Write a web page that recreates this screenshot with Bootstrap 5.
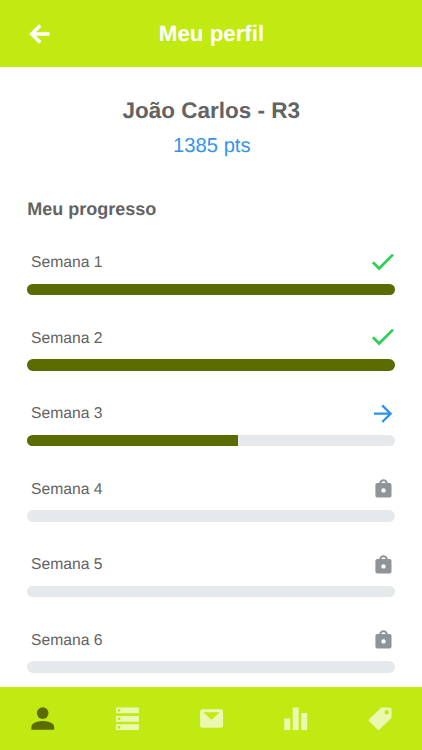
<!DOCTYPE html>
<html lang="pt-BR">
<head>
<meta charset="utf-8">
<meta name="viewport" content="width=device-width, initial-scale=1">
<title>Meu perfil</title>
<link href="https://cdn.jsdelivr.net/npm/bootstrap@5.3.0/dist/css/bootstrap.min.css" rel="stylesheet">
<style>
body{font-family:"Liberation Sans",Arial,sans-serif;color:#636363;height:750px;overflow:hidden;text-rendering:geometricPrecision}
.top-bar{height:66.6px;background:#c0ea12;flex:none;padding:1px 27.5px 0 27.5px}
.top-bar h1{font-size:22.3px;line-height:26px;padding-left:1px}
.side{width:24px}
.person-name{font-size:22.5px;line-height:26px;margin-top:31.4px;padding-left:1px}
.points{font-size:20.2px;line-height:24px;color:#3295e8;margin-top:10px;padding-left:2px}
.section-title{font-size:18px;line-height:22px;margin-top:40px;margin-bottom:20px}
.content{padding:0 27.5px 0 27.2px;min-height:0}
.week{height:75.5px}
.week-head{height:44px;padding:2px 0 0 3.8px;font-size:15.7px}
.progress{--bs-progress-height:11.4px;--bs-progress-bg:#e6e9ec;--bs-progress-border-radius:6px;--bs-progress-bar-bg:#5b6b00}
.week-head svg{width:24px;height:24px;flex:none}
.tab-bar{height:63px;background:#c0ea12;flex:none}
.tab-bar a{color:#ebf8b0}
.tab-bar a.active{color:#5b6b00}
.tab-bar svg{width:26px;height:26px}
</style>
</head>
<body class="d-flex flex-column bg-white">
<svg class="d-none">
  <symbol id="check" viewBox="0 0 24 24"><path d="M1.900 11.300l6.200 6.200L22 3.600" fill="none" stroke="#2fce57" stroke-width="2.700"/></symbol>
  <symbol id="next" viewBox="0 0 24 24"><path d="M3 11.700h17M11.200 3.400l8.400 8.300-8.400 8.300" fill="none" stroke="#2b91ee" stroke-width="2.300"/></symbol>
  <symbol id="lock" viewBox="0 0 24 24"><path d="M9.200 7.500V6.500a3.300 3.300 0 0 1 6.600 0v1" fill="none" stroke="#919497" stroke-width="2.100"/><path fill="#919497" fill-rule="evenodd" d="M6.200 6h12.500a1.800 1.800 0 0 1 1.800 1.800v10.900a1.800 1.800 0 0 1-1.800 1.800H6.200a1.800 1.800 0 0 1-1.800-1.800V7.800A1.800 1.800 0 0 1 6.200 6zM12.500 11.200a2.200 2.200 0 1 0 0 4.400 2.200 2.200 0 0 0 0-4.400z"/></symbol>
</svg>
<header class="top-bar d-flex align-items-center justify-content-between">
  <a href="#" class="side d-flex" aria-label="Voltar"><svg width="24" height="24" viewBox="0 0 24 24"><path d="M21.600 12H4.200M12.200 3.400L3.700 12l8.500 8.600" fill="none" stroke="#fff" stroke-width="3.500"/></svg></a>
  <h1 class="fw-bold text-white mb-0">Meu perfil</h1>
  <span class="side"></span>
</header>
<main class="content flex-grow-1 overflow-hidden">
  <h2 class="person-name fw-bold text-center mb-0">João Carlos - R3</h2>
  <p class="points text-center mb-0">1385 pts</p>
  <h3 class="section-title fw-bold">Meu progresso</h3>
  <section class="week"><div class="week-head d-flex align-items-center justify-content-between"><span>Semana 1</span><svg><use href="#check"/></svg></div><div class="progress"><div class="progress-bar w-100"></div></div></section>
  <section class="week"><div class="week-head d-flex align-items-center justify-content-between"><span>Semana 2</span><svg><use href="#check"/></svg></div><div class="progress"><div class="progress-bar w-100"></div></div></section>
  <section class="week"><div class="week-head d-flex align-items-center justify-content-between"><span>Semana 3</span><svg><use href="#next"/></svg></div><div class="progress"><div class="progress-bar" style="width:57.500%"></div></div></section>
  <section class="week"><div class="week-head d-flex align-items-center justify-content-between"><span>Semana 4</span><svg><use href="#lock"/></svg></div><div class="progress"></div></section>
  <section class="week"><div class="week-head d-flex align-items-center justify-content-between"><span>Semana 5</span><svg><use href="#lock"/></svg></div><div class="progress"></div></section>
  <section class="week"><div class="week-head d-flex align-items-center justify-content-between"><span>Semana 6</span><svg><use href="#lock"/></svg></div><div class="progress"></div></section>
</main>
<nav class="tab-bar nav nav-fill align-items-center flex-nowrap">
  <a href="#" class="active col d-flex justify-content-center" aria-label="Perfil"><svg viewBox="0 0 26 26" fill="currentColor"><circle cx="13.700" cy="7.100" r="5.800"/><path d="M2.400 23.700v-2.800c0-3.800 6.500-5.900 11.400-5.900s11.400 2.100 11.400 5.900v2.800z"/></svg></a>
  <a href="#" class="col d-flex justify-content-center" aria-label="Lista"><svg viewBox="0 0 26 26" fill="currentColor" fill-rule="evenodd"><path d="M2 1.500h22.900v5.800H2zM3.700 3.100v2.500h2.600V3.100zM2 9.900h22.900v5.800H2zM3.700 11.500v2.500h2.600v-2.500zM2 18.300h22.900v5.800H2zM3.700 19.900v2.500h2.600v-2.500z"/></svg></a>
  <a href="#" class="col d-flex justify-content-center" aria-label="Mensagens"><svg viewBox="0 0 26 26" fill="currentColor" fill-rule="evenodd"><path d="M4.600 3.300h18a2.500 2.500 0 0 1 2.500 2.500v13.400a2.500 2.500 0 0 1-2.500 2.500h-18a2.500 2.500 0 0 1-2.500-2.500V5.800a2.500 2.500 0 0 1 2.500-2.500zM5.300 6.200l8.200 7.500 8.200-7.500z"/></svg></a>
  <a href="#" class="col d-flex justify-content-center" aria-label="Ranking"><svg viewBox="0 0 26 26" fill="currentColor"><path d="M2.200 12.500h6v11.500h-6zM10.700 1.500h6V24h-6zM19.200 7h6v17h-6z"/></svg></a>
  <a href="#" class="col d-flex justify-content-center" aria-label="Ofertas"><svg viewBox="0 0 26 26" fill="currentColor" fill-rule="evenodd"><path d="M14.200 1.500h8.700a1.700 1.700 0 0 1 1.700 1.700v8.600L12.300 23.700a1 1 0 0 1-1.400 0L1.900 15a1 1 0 0 1 0-1.500zM19.700 4a2.200 2.200 0 1 0 0 4.400 2.200 2.200 0 0 0 0-4.400z"/></svg></a>
</nav>
<script src="https://cdn.jsdelivr.net/npm/bootstrap@5.3.0/dist/js/bootstrap.bundle.min.js"></script>
</body>
</html>
